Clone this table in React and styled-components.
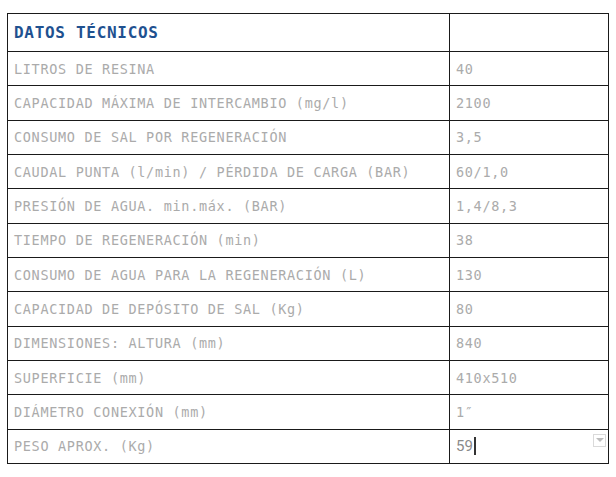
import React from "react";
import styled, { createGlobalStyle } from "styled-components";

const GlobalStyle = createGlobalStyle`
  html, body {
    margin: 0;
    padding: 0;
    background: #ffffff;
  }
`;

const Page = styled.div`
  padding: 13px 9px 0 7px;
`;

const Table = styled.table`
  width: 601px;
  border-collapse: collapse;
  table-layout: fixed;
  font-family: "DejaVu Sans Mono", "Liberation Mono", monospace;
`;

const Col = styled.col`
  width: ${(p) => p.$width}px;
`;

const HeadCell = styled.th`
  border: 1px solid #1a1a1a;
  height: 37px;
  padding: 0 6px;
  text-align: left;
  vertical-align: middle;
  font-size: 16px;
  font-weight: bold;
  letter-spacing: 0.7px;
  color: #1f5190;
`;

const Cell = styled.td`
  position: relative;
  border: 1px solid #1a1a1a;
  height: 33.33px;
  padding: 0 6px;
  vertical-align: middle;
  font-size: 13.5px;
  letter-spacing: 0.68px;
  font-weight: normal;
  color: #ababab;
  white-space: nowrap;
`;

const EditValue = styled.span`
  display: inline-flex;
  align-items: center;
  font-family: Roboto, "Noto Sans", sans-serif;
  font-size: 15px;
  letter-spacing: 0;
  color: #8a8a8a;
`;

const Caret = styled.span`
  display: inline-block;
  width: 2px;
  height: 18px;
  margin-left: 1px;
  background: #333333;
`;

const DropToggle = styled.span`
  position: absolute;
  top: 4px;
  right: 2px;
  width: 11px;
  height: 11px;
  border: 1px solid #dadada;
  display: flex;
  align-items: center;
  justify-content: center;

  &::after {
    content: "";
    border-left: 4px solid transparent;
    border-right: 4px solid transparent;
    border-top: 4px solid #bdbdbd;
  }
`;

const rows = [
  ["LITROS DE RESINA", "40"],
  ["CAPACIDAD MÁXIMA DE INTERCAMBIO (mg/l)", "2100"],
  ["CONSUMO DE SAL POR REGENERACIÓN", "3,5"],
  ["CAUDAL PUNTA (l/min) / PÉRDIDA DE CARGA (BAR)", "60/1,0"],
  ["PRESIÓN DE AGUA. min.máx. (BAR)", "1,4/8,3"],
  ["TIEMPO DE REGENERACIÓN (min)", "38"],
  ["CONSUMO DE AGUA PARA LA REGENERACIÓN (L)", "130"],
  ["CAPACIDAD DE DEPÓSITO DE SAL (Kg)", "80"],
  ["DIMENSIONES: ALTURA (mm)", "840"],
  ["SUPERFICIE (mm)", "410x510"],
  ["DIÁMETRO CONEXIÓN (mm)", "1″"],
];

export default function App() {
  return (
    <Page>
      <GlobalStyle />
      <Table>
        <colgroup>
          <Col $width={442} />
          <Col $width={159} />
        </colgroup>
        <thead>
          <tr>
            <HeadCell>DATOS TÉCNICOS</HeadCell>
            <HeadCell />
          </tr>
        </thead>
        <tbody>
          {rows.map(([label, value]) => (
            <tr key={label}>
              <Cell>{label}</Cell>
              <Cell>{value}</Cell>
            </tr>
          ))}
          <tr>
            <Cell>PESO APROX. (Kg)</Cell>
            <Cell>
              <EditValue>
                59
                <Caret />
              </EditValue>
              <DropToggle />
            </Cell>
          </tr>
        </tbody>
      </Table>
    </Page>
  );
}
